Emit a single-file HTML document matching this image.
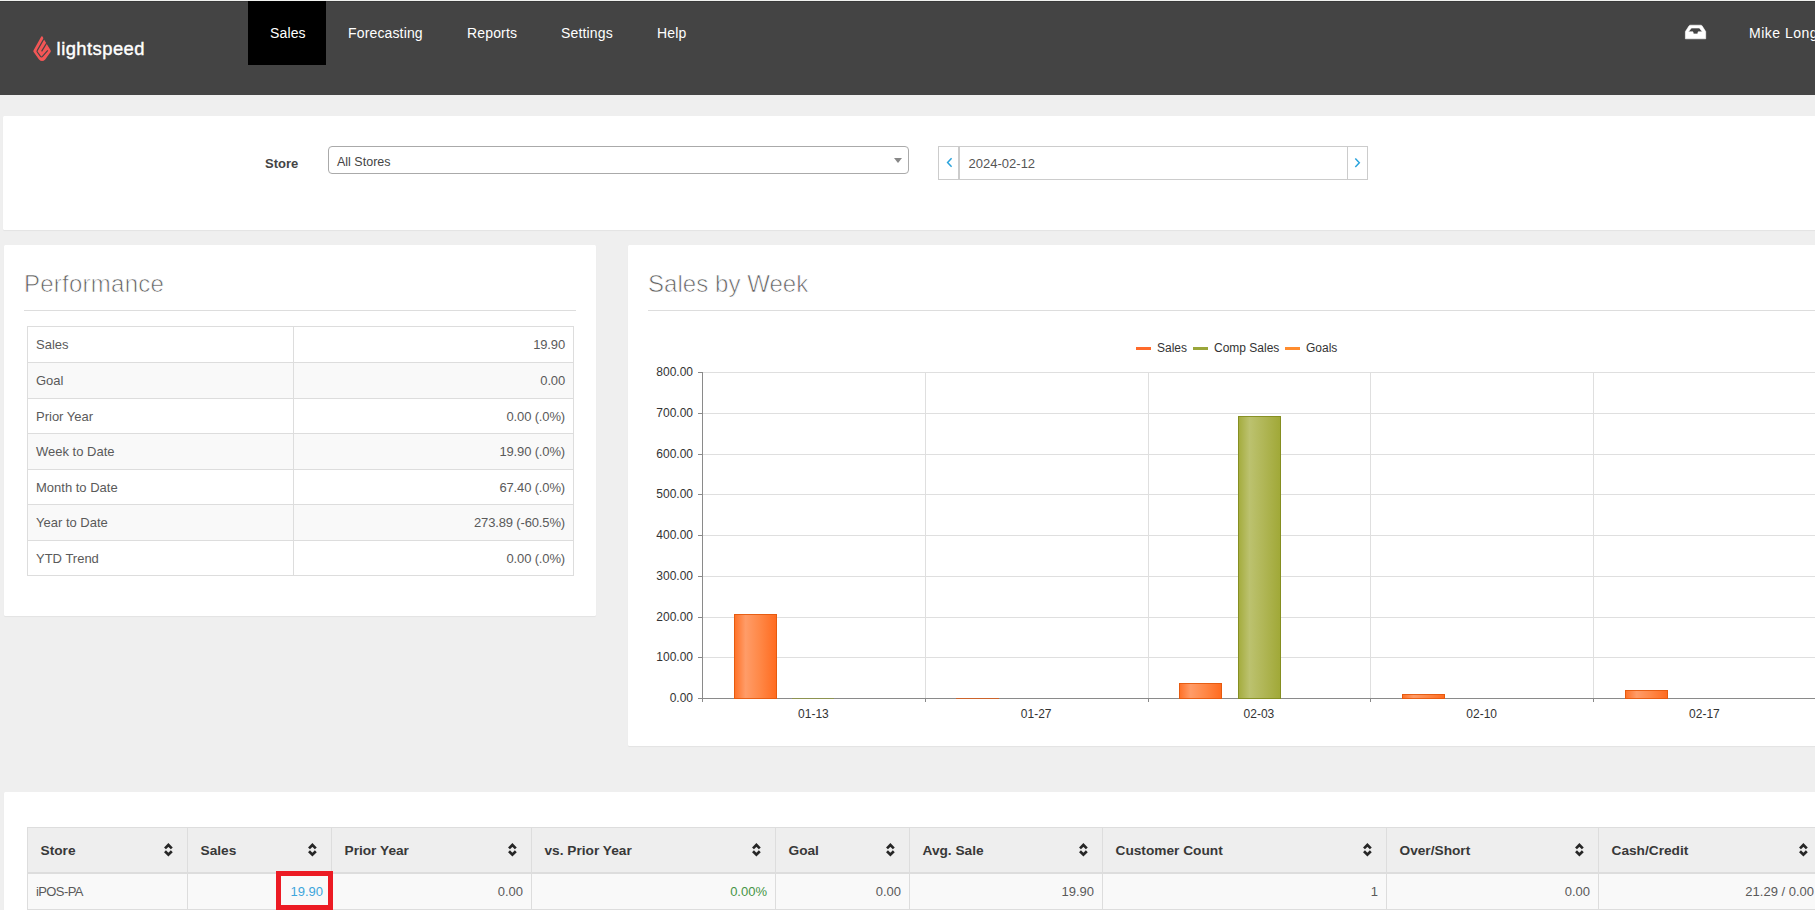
<!DOCTYPE html>
<html><head><meta charset="utf-8">
<style>
*{margin:0;padding:0;box-sizing:border-box}
html,body{width:1815px;height:910px;overflow:hidden;background:#efefef;font-family:"Liberation Sans",sans-serif;position:relative}
.abs{position:absolute}
#top{left:0;top:0;width:1815px;height:1px;background:#f1f2f0}
#hdr{left:0;top:1px;width:1815px;height:94px;background:#444;border-top:1px solid #393939}
.t{position:absolute;white-space:nowrap;line-height:1}
.nav{color:#fff;font-size:14px;top:26px;letter-spacing:0.15px}
.card{position:absolute;background:#fff;border-radius:1.5px;box-shadow:0 1px 1px rgba(0,0,0,.05)}
.ptitle{font-size:24px;color:#606060;-webkit-text-stroke:0.7px #fff;paint-order:normal;letter-spacing:0.25px;font-weight:normal}
.hr{position:absolute;height:1px;background:#ddd}
table.perf{position:absolute;left:27px;top:326px;width:547px;border-collapse:collapse;font-size:13px;line-height:1.42857143;color:#5a5a5a}
table.perf td{border:1px solid #ddd;padding:0 8px;vertical-align:top;padding-top:9px}
table.perf tr:nth-child(even) td{background:#f9f9f9}
table.perf td.r{text-align:right;letter-spacing:-0.15px}
.yl{left:600px;width:93px;text-align:right;font-size:12px;color:#333}
.xl{width:100px;text-align:center;font-size:12px;color:#333}
.lg{font-size:12px;color:#333}
.th{top:844px;font-size:13.7px;font-weight:bold;color:#383838}
.td{top:885px;font-size:13px;color:#5a5a5a}
.lnk{color:#3ea6dc}
.grn{color:#459545}
</style></head>
<body>
<div id="top" class="abs"></div>
<div id="hdr" class="abs"></div>
<div class="abs" style="left:248px;top:1px;width:78px;height:64px;background:#000"></div>
<svg class="abs" style="left:0;top:0" width="160" height="95">
  <path fill="#f35656" d="M41.3 36.4 Q41.9 35.8 42.5 36.6 L44.5 40.3 L47.2 44.7 L50.6 50.3 Q51.2 51.2 50.6 52.1 L45.2 59.4 Q42.1 62.8 39 59.4 L33.6 52.1 Q33 51.2 33.6 50.3 Z"/>
  <g fill="none" stroke="#444" stroke-width="1.15" stroke-linejoin="round">
    <path d="M45.3 36.4 L37.3 50.4 Q36.7 51.2 37.3 52 L40.3 56.2 Q41.5 57.8 42.7 56.2 L47.8 50.4"/>
    <path d="M48.3 40.4 L41.6 51.4"/>
  </g>
</svg>
<div class="t" style="left:56.6px;top:40px;font-size:18.4px;color:#fff;letter-spacing:0.45px;-webkit-text-stroke:0.4px #fff">lightspeed</div>
<div class="t nav" style="left:270px">Sales</div>
<div class="t nav" style="left:348px">Forecasting</div>
<div class="t nav" style="left:467px">Reports</div>
<div class="t nav" style="left:561px">Settings</div>
<div class="t nav" style="left:657px">Help</div>
<svg class="abs" style="left:1678px;top:18px" width="36" height="28">
  <path fill="#fff" fill-rule="evenodd" stroke="#fff" stroke-width="0.6" stroke-linejoin="round" d="M12.3 7.2 H23.1 Q23.6 7.2 24 7.8 L27.7 13.6 V20.8 H7.4 V13.6 L11.1 7.8 Q11.6 7.2 12.3 7.2 Z M13.4 10 L10.4 13.8 H14.9 L15.5 15.9 H19.6 L20.2 13.8 H24.3 L21.4 10 Z"/>
</svg>
<div class="t nav" style="left:1749px;letter-spacing:0.5px">Mike Long</div>

<!-- filter card -->
<div class="card" style="left:3px;top:116px;width:1830px;height:114px"></div>
<div class="t" style="left:265px;top:157px;font-size:13px;font-weight:bold;color:#444">Store</div>
<div class="abs" style="left:328px;top:146px;width:581px;height:28px;border:1px solid #aaa;border-radius:4px;background:#fff"></div>
<div class="t" style="left:337px;top:156px;font-size:12.5px;color:#444">All Stores</div>
<svg class="abs" style="left:893px;top:157px" width="10" height="7"><path d="M1 1 H9 L5 6 Z" fill="#888"/></svg>
<div class="abs" style="left:938px;top:146px;width:430px;height:34px;border:1px solid #ccc;background:#fff"></div>
<div class="abs" style="left:958px;top:146px;width:2px;height:34px;background:#ccc"></div>
<div class="abs" style="left:1347px;top:146px;width:1px;height:34px;background:#ccc"></div>
<svg class="abs" style="left:944px;top:157px" width="12" height="12"><path d="M7.6 1.3 L3.6 5.5 L7.6 9.7" fill="none" stroke="#2aa3dc" stroke-width="1.5"/></svg>
<svg class="abs" style="left:1352px;top:157px" width="12" height="12"><path d="M3.3 1.5 L7.3 5.7 L3.3 9.9" fill="none" stroke="#2aa3dc" stroke-width="1.5"/></svg>
<div class="t" style="left:968.6px;top:157px;font-size:13px;color:#555">2024-02-12</div>

<!-- performance card -->
<div class="card" style="left:4px;top:245px;width:592px;height:371px"></div>
<div class="t ptitle" style="left:24px;top:272px">Performance</div>
<div class="hr" style="left:24px;top:310px;width:552px"></div>
<table class="perf">
<tr style="height:36px"><td style="width:266px">Sales</td><td class="r">19.90</td></tr>
<tr style="height:36px"><td>Goal</td><td class="r">0.00</td></tr>
<tr style="height:35px"><td>Prior Year</td><td class="r">0.00 (.0%)</td></tr>
<tr style="height:36px"><td>Week to Date</td><td class="r">19.90 (.0%)</td></tr>
<tr style="height:35px"><td>Month to Date</td><td class="r">67.40 (.0%)</td></tr>
<tr style="height:36px"><td>Year to Date</td><td class="r">273.89 (-60.5%)</td></tr>
<tr style="height:35px"><td>YTD Trend</td><td class="r">0.00 (.0%)</td></tr>
</table>

<!-- chart card -->
<div class="card" style="left:628px;top:245px;width:1200px;height:501px"></div>
<div class="t ptitle" style="left:648px;top:272px;letter-spacing:0.05px">Sales by Week</div>
<div class="hr" style="left:648px;top:310px;width:1200px"></div>

<!--CHART-->
<svg class="abs" style="left:0;top:0" width="1815" height="910" shape-rendering="crispEdges">
<defs>
<linearGradient id="go" x1="0" x2="1" y1="0" y2="0"><stop offset="0" stop-color="#ff6f24"/><stop offset="0.27" stop-color="#ff9c68"/><stop offset="0.6" stop-color="#ff8847"/><stop offset="1" stop-color="#ff6a1e"/></linearGradient>
<linearGradient id="gg" x1="0" x2="1" y1="0" y2="0"><stop offset="0" stop-color="#a3ab3b"/><stop offset="0.27" stop-color="#bcc26f"/><stop offset="0.6" stop-color="#b0b656"/><stop offset="1" stop-color="#a0a836"/></linearGradient>
</defs>
<rect x="702" y="372" width="1113" height="1" fill="#dfdfdf"/>
<rect x="702" y="413" width="1113" height="1" fill="#dfdfdf"/>
<rect x="702" y="454" width="1113" height="1" fill="#dfdfdf"/>
<rect x="702" y="494" width="1113" height="1" fill="#dfdfdf"/>
<rect x="702" y="535" width="1113" height="1" fill="#dfdfdf"/>
<rect x="702" y="576" width="1113" height="1" fill="#dfdfdf"/>
<rect x="702" y="617" width="1113" height="1" fill="#dfdfdf"/>
<rect x="702" y="657" width="1113" height="1" fill="#dfdfdf"/>
<rect x="925" y="372" width="1" height="326" fill="#dfdfdf"/>
<rect x="1148" y="372" width="1" height="326" fill="#dfdfdf"/>
<rect x="1370" y="372" width="1" height="326" fill="#dfdfdf"/>
<rect x="1593" y="372" width="1" height="326" fill="#dfdfdf"/>
<rect x="698" y="372" width="4" height="1" fill="#8a8a8a"/>
<rect x="698" y="413" width="4" height="1" fill="#8a8a8a"/>
<rect x="698" y="454" width="4" height="1" fill="#8a8a8a"/>
<rect x="698" y="494" width="4" height="1" fill="#8a8a8a"/>
<rect x="698" y="535" width="4" height="1" fill="#8a8a8a"/>
<rect x="698" y="576" width="4" height="1" fill="#8a8a8a"/>
<rect x="698" y="617" width="4" height="1" fill="#8a8a8a"/>
<rect x="698" y="657" width="4" height="1" fill="#8a8a8a"/>
<rect x="698" y="698" width="4" height="1" fill="#8a8a8a"/>
<rect x="702" y="372" width="1" height="330" fill="#8a8a8a"/>
<rect x="702" y="698" width="1113" height="1" fill="#8a8a8a"/>
<rect x="925" y="698" width="1" height="4" fill="#8a8a8a"/>
<rect x="1148" y="698" width="1" height="4" fill="#8a8a8a"/>
<rect x="1370" y="698" width="1" height="4" fill="#8a8a8a"/>
<rect x="1593" y="698" width="1" height="4" fill="#8a8a8a"/>
<rect x="734" y="614" width="43" height="85" fill="url(#go)"/>
<rect x="734.5" y="614.5" width="42" height="84" fill="none" stroke="#e2570c" stroke-width="1" shape-rendering="auto" opacity="0.85"/>
<rect x="792" y="698" width="42" height="1" fill="#8f9a2a" opacity="0.6"/>
<rect x="956" y="698" width="43" height="1" fill="#e2570c" opacity="0.75"/>
<rect x="1179" y="683" width="43" height="16" fill="url(#go)"/>
<rect x="1179.5" y="683.5" width="42" height="15" fill="none" stroke="#e2570c" stroke-width="1" shape-rendering="auto" opacity="0.85"/>
<rect x="1238" y="416" width="43" height="283" fill="url(#gg)"/>
<rect x="1238.5" y="416.5" width="42" height="282" fill="none" stroke="#808a1c" stroke-width="1" shape-rendering="auto" opacity="0.85"/>
<rect x="1402" y="694" width="43" height="5" fill="url(#go)"/>
<rect x="1402.5" y="694.5" width="42" height="4" fill="none" stroke="#e2570c" stroke-width="1" shape-rendering="auto" opacity="0.85"/>
<rect x="1625" y="690" width="43" height="9" fill="url(#go)"/>
<rect x="1625.5" y="690.5" width="42" height="8" fill="none" stroke="#e2570c" stroke-width="1" shape-rendering="auto" opacity="0.85"/>
<rect x="1136" y="347" width="15" height="3" fill="#ff6a2a"/>
<rect x="1193" y="347" width="15" height="3" fill="#9aa63a"/>
<rect x="1285" y="347" width="15" height="3" fill="#ff8c2e"/>
</svg>
<div class="t yl" style="top:366px">800.00</div>
<div class="t yl" style="top:407px">700.00</div>
<div class="t yl" style="top:448px">600.00</div>
<div class="t yl" style="top:488px">500.00</div>
<div class="t yl" style="top:529px">400.00</div>
<div class="t yl" style="top:570px">300.00</div>
<div class="t yl" style="top:611px">200.00</div>
<div class="t yl" style="top:651px">100.00</div>
<div class="t yl" style="top:692px">0.00</div>
<div class="t xl" style="left:763.4px;top:708px">01-13</div>
<div class="t xl" style="left:986.2px;top:708px">01-27</div>
<div class="t xl" style="left:1208.9px;top:708px">02-03</div>
<div class="t xl" style="left:1431.7px;top:708px">02-10</div>
<div class="t xl" style="left:1654.4px;top:708px">02-17</div>
<div class="t lg" style="left:1157px;top:342px">Sales</div>
<div class="t lg" style="left:1214px;top:342px">Comp Sales</div>
<div class="t lg" style="left:1306px;top:342px">Goals</div>
<!--/CHART-->
<!-- table card -->
<div class="card" style="left:4px;top:792px;width:1830px;height:200px"></div>
<div class="abs" style="left:27px;top:827px;width:1800px;height:47px;background:#eee"></div>
<div class="abs" style="left:27px;top:874px;width:1800px;height:36px;background:#f9f9f9"></div>
<div class="abs" style="left:27px;top:827px;width:1800px;height:1px;background:#ddd"></div>
<div class="abs" style="left:27px;top:872px;width:1800px;height:2px;background:#ddd"></div>
<div class="abs" style="left:27px;top:909px;width:1800px;height:1px;background:#ddd"></div>
<div class="abs" style="left:27px;top:827px;width:1px;height:82px;background:#ddd"></div>
<div class="abs" style="left:187px;top:827px;width:1px;height:82px;background:#ddd"></div>
<div class="abs" style="left:331px;top:827px;width:1px;height:82px;background:#ddd"></div>
<div class="abs" style="left:531px;top:827px;width:1px;height:82px;background:#ddd"></div>
<div class="abs" style="left:775px;top:827px;width:1px;height:82px;background:#ddd"></div>
<div class="abs" style="left:909px;top:827px;width:1px;height:82px;background:#ddd"></div>
<div class="abs" style="left:1102px;top:827px;width:1px;height:82px;background:#ddd"></div>
<div class="abs" style="left:1386px;top:827px;width:1px;height:82px;background:#ddd"></div>
<div class="abs" style="left:1598px;top:827px;width:1px;height:82px;background:#ddd"></div>
<div class="abs" style="left:1822px;top:827px;width:1px;height:82px;background:#ddd"></div>
<div class="t th" style="left:40.5px">Store</div>
<svg class="abs" style="left:163px;top:842px" width="11" height="16"><g fill="none" stroke="#262626" stroke-width="2.7"><path d="M2 6.4 L5.4 3 L8.8 6.4"/><path d="M2 9.2 L5.4 12.6 L8.8 9.2"/></g></svg>
<div class="t th" style="left:200.5px">Sales</div>
<svg class="abs" style="left:307px;top:842px" width="11" height="16"><g fill="none" stroke="#262626" stroke-width="2.7"><path d="M2 6.4 L5.4 3 L8.8 6.4"/><path d="M2 9.2 L5.4 12.6 L8.8 9.2"/></g></svg>
<div class="t th" style="left:344.5px">Prior Year</div>
<svg class="abs" style="left:507px;top:842px" width="11" height="16"><g fill="none" stroke="#262626" stroke-width="2.7"><path d="M2 6.4 L5.4 3 L8.8 6.4"/><path d="M2 9.2 L5.4 12.6 L8.8 9.2"/></g></svg>
<div class="t th" style="left:544.5px">vs. Prior Year</div>
<svg class="abs" style="left:751px;top:842px" width="11" height="16"><g fill="none" stroke="#262626" stroke-width="2.7"><path d="M2 6.4 L5.4 3 L8.8 6.4"/><path d="M2 9.2 L5.4 12.6 L8.8 9.2"/></g></svg>
<div class="t th" style="left:788.5px">Goal</div>
<svg class="abs" style="left:885px;top:842px" width="11" height="16"><g fill="none" stroke="#262626" stroke-width="2.7"><path d="M2 6.4 L5.4 3 L8.8 6.4"/><path d="M2 9.2 L5.4 12.6 L8.8 9.2"/></g></svg>
<div class="t th" style="left:922.5px">Avg. Sale</div>
<svg class="abs" style="left:1078px;top:842px" width="11" height="16"><g fill="none" stroke="#262626" stroke-width="2.7"><path d="M2 6.4 L5.4 3 L8.8 6.4"/><path d="M2 9.2 L5.4 12.6 L8.8 9.2"/></g></svg>
<div class="t th" style="left:1115.5px">Customer Count</div>
<svg class="abs" style="left:1362px;top:842px" width="11" height="16"><g fill="none" stroke="#262626" stroke-width="2.7"><path d="M2 6.4 L5.4 3 L8.8 6.4"/><path d="M2 9.2 L5.4 12.6 L8.8 9.2"/></g></svg>
<div class="t th" style="left:1399.5px">Over/Short</div>
<svg class="abs" style="left:1574px;top:842px" width="11" height="16"><g fill="none" stroke="#262626" stroke-width="2.7"><path d="M2 6.4 L5.4 3 L8.8 6.4"/><path d="M2 9.2 L5.4 12.6 L8.8 9.2"/></g></svg>
<div class="t th" style="left:1611.5px">Cash/Credit</div>
<svg class="abs" style="left:1798px;top:842px" width="11" height="16"><g fill="none" stroke="#262626" stroke-width="2.7"><path d="M2 6.4 L5.4 3 L8.8 6.4"/><path d="M2 9.2 L5.4 12.6 L8.8 9.2"/></g></svg>
<div class="t td" style="left:36px;letter-spacing:-0.6px">iPOS-PA</div>
<div class="t td lnk" style="left:23px;width:300px;text-align:right">19.90</div>
<div class="t td" style="left:223px;width:300px;text-align:right">0.00</div>
<div class="t td grn" style="left:467px;width:300px;text-align:right">0.00%</div>
<div class="t td" style="left:601px;width:300px;text-align:right">0.00</div>
<div class="t td" style="left:794px;width:300px;text-align:right">19.90</div>
<div class="t td" style="left:1078px;width:300px;text-align:right">1</div>
<div class="t td" style="left:1290px;width:300px;text-align:right">0.00</div>
<div class="t td" style="left:1514px;width:300px;text-align:right">21.29 / 0.00</div>
<div class="abs" style="left:276px;top:871px;width:57px;height:39px;border:5px solid #ec1b24"></div>
</body></html>
